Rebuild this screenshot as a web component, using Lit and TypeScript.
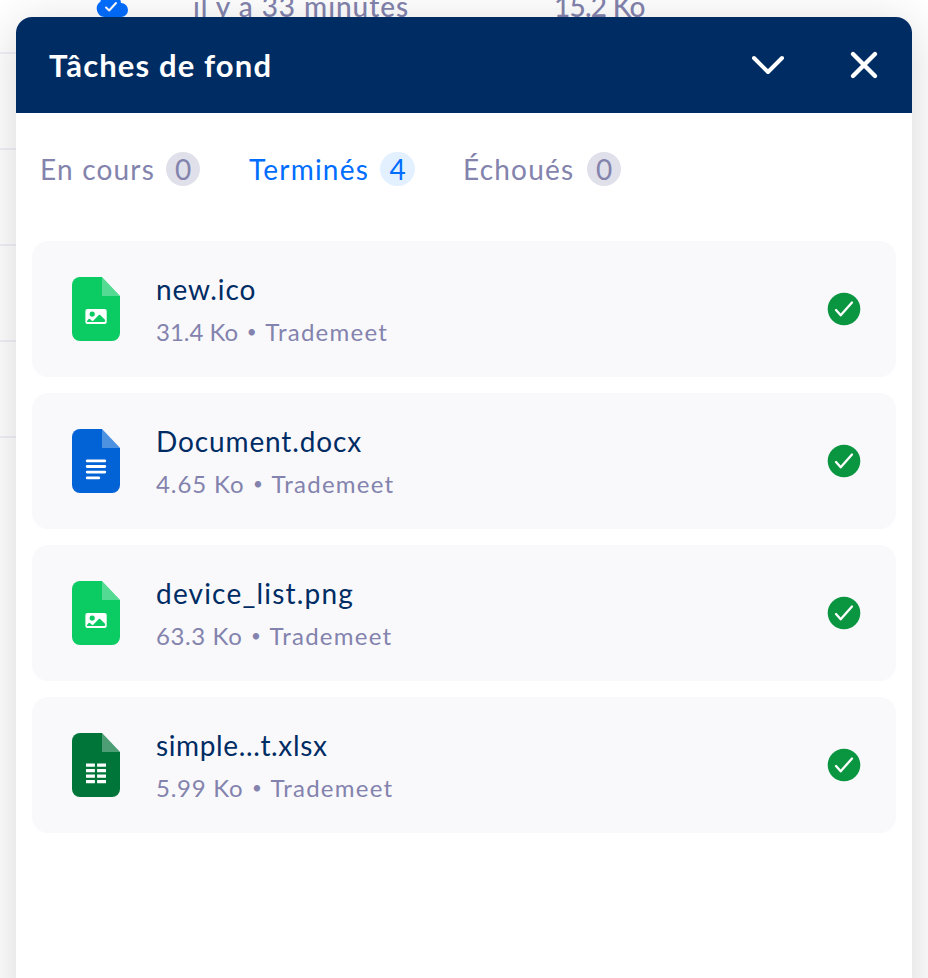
import { LitElement, html, css, svg } from "lit";
import { customElement, property } from "lit/decorators.js";

type Kind = "image" | "text" | "sheet";

const glyphs = {
  image: svg`<rect x="13.4" y="32" width="21.3" height="15" rx="2" fill="#fff"/>
    <circle cx="20.200" cy="37.1" r="2.6" fill="#0bcb63"/>
    <path d="M15 45v-1l1.700-2q.6-.6 1.200 0l2 1.700q.7.500 1.300 0l5.600-5.700q.7-.7 1.400 0l5 5v1.200l-.8.8z" fill="#0bcb63"/>`,
  text: svg`<path d="M15.2 31.9h17.600M15.2 37.500h17.600M15.2 43.100h17.600M15.2 48.900h11.600" stroke="#fff" stroke-width="2.8" stroke-linecap="round"/>`,
  sheet: svg`<path d="M14 32.1h8.9M25.1 32.1h8.9M14 37.6h8.9M25.1 37.6h8.9M14 43.1h8.9M25.1 43.1h8.9M14 48.6h8.9M25.1 48.6h8.9" stroke="#fff" stroke-width="3.1"/>`,
};
const colors: Record<Kind, string> = { image: "#0bcb63", text: "#0163d5", sheet: "#007539" };

@customElement("file-icon")
class FileIcon extends LitElement {
  static styles = css`
    :host { display: block; width: 48px; height: 64px; }
    svg { display: block; }
  `;
  @property() kind: Kind = "text";
  render() {
    return html`<svg width="48" height="64" viewBox="0 0 48 64" fill="none">
      <path d="M8 0h22l18 19v37a8 8 0 0 1-8 8H8a8 8 0 0 1-8-8V8a8 8 0 0 1 8-8z" fill=${colors[this.kind]} />
      <path d="M30 0l18 19H30z" fill="#fff" fill-opacity=".3" />
      ${glyphs[this.kind]}
    </svg>`;
  }
}

const tabs = [
  { label: "En cours", count: 0, cls: "running" },
  { label: "Terminés", count: 4, cls: "done active" },
  { label: "Échoués", count: 0, cls: "failed" },
];
const files: { name: string; size: string; kind: Kind; cls: string }[] = [
  { name: "new.ico", size: "31.4 Ko", kind: "image", cls: "f1" },
  { name: "Document.docx", size: "4.65 Ko", kind: "text", cls: "f2" },
  { name: "device_list.png", size: "63.3 Ko", kind: "image", cls: "f3" },
  { name: "simple...t.xlsx", size: "5.99 Ko", kind: "sheet", cls: "f4" },
];

@customElement("app-root")
class AppRoot extends LitElement {
  static styles = css`
    * { box-sizing: border-box; }
    :host {
      display: grid; width: 928px; height: 978px; overflow: hidden; background: #fff;
      font-family: "Lato", "Open Sans", sans-serif; color: #8383ad;
    }
    .list, .panel { grid-area: 1 / 1; }
    .list { margin: -42px 32px 0 0; }
    .line {
      height: 96px; border-bottom: 2px solid #f0f0f7; display: grid;
      grid-template-columns: 96px 97px 361px 1fr; align-items: center;
      font-size: 28px; font-weight: 500; white-space: nowrap; line-height: 36px;
    }
    .cloud { grid-column: 2; display: block; }
    .ago { letter-spacing: .97px; padding-top: 2px; }
    .size { letter-spacing: -.75px; padding-top: 2px; }
    .panel {
      margin: 17px 16px 0; height: 1000px; background: #fff; border-radius: 16px 16px 0 0;
      box-shadow: 0 8px 48px rgba(0, 0, 0, .16); overflow: hidden; position: relative;
    }
    header {
      height: 96px; background: #002c64; color: #fff; display: flex; align-items: center;
      padding: 0 32px 0 33px;
    }
    h1 { margin: 0; flex: 1; font-size: 31px; font-weight: 700; letter-spacing: 1.13px; line-height: 40px; padding-bottom: 1px; }
    header svg { display: block; }
    header svg + svg { margin-left: 64px; }
    .tabs { display: flex; height: 128px; padding: 39px 24px 0; gap: 48px; }
    .tab { display: flex; gap: 12px; height: 34px; font-size: 28px; line-height: 35px; white-space: nowrap; }
    .label { letter-spacing: 1.2px; }
    .running .label { width: 114px; }
    .done .label { width: 119px; }
    .failed .label { width: 112px; }
    .running { margin-right: 1px; }
    .active { color: #006dff; }
    .count { width: 34px; border-radius: 17px; background: #e0e0ea; text-align: center; }
    .active .count { width: 35px; background: #e3f0ff; }
    .cards { display: grid; gap: 16px; padding: 0 16px; }
    .card {
      height: 136px; border-radius: 16px; background: #f9f9fc; display: flex; align-items: center;
      padding: 0 34px 0 40px;
    }
    .info { flex: 1; margin-left: 36px; padding-top: 2px; white-space: nowrap; }
    .name { font-size: 28px; line-height: 44px; color: #002c64; letter-spacing: .88px; }
    .meta { font-size: 24px; line-height: 42px; display: flex; }
    .weight { letter-spacing: .9px; }
    .f1 .weight { letter-spacing: 0; }
    .f3 .weight { letter-spacing: .6px; }
    .f4 .weight { letter-spacing: .75px; }
    .f3 .name { letter-spacing: 1.2px; }
    .f4 .name { letter-spacing: .63px; }
    .dot { width: 27px; text-align: center; font-size: 17px; }
    .owner { letter-spacing: 1.25px; }
  `;

  render() {
    return html`
      <div class="list">
        <div class="line">
          <svg class="cloud" width="32" height="24" viewBox="0 0 32 24">
            <path d="M8.500 24A8.500 8.500 0 0 1 4.500 8.500 10 10 0 0 1 14.500 0Q24 .8 25 10a7 7 0 0 1 0 14z" fill="#006dff" />
            <path d="M10 14.500l3.200 3 6.800-7.500" fill="none" stroke="#fff" stroke-width="2" stroke-linecap="round" stroke-linejoin="round" />
          </svg>
          <span class="ago">il y a 33 minutes</span>
          <span class="size">15.2 Ko</span>
        </div>
        <div class="line"></div><div class="line"></div><div class="line"></div><div class="line"></div>
      </div>
      <section class="panel">
        <header>
          <h1>Tâches de fond</h1>
          <svg width="32" height="32" viewBox="0 0 32 32" fill="none" stroke="#fff" stroke-width="4" stroke-linecap="round" stroke-linejoin="round"><path d="M2 9l14 14L30 9" /></svg>
          <svg width="32" height="32" viewBox="0 0 32 32" fill="none" stroke="#fff" stroke-width="4.400" stroke-linecap="round"><path d="M5 5l22 22M27 5L5 27" /></svg>
        </header>
        <nav class="tabs">
          ${tabs.map((t) => html`<div class="tab ${t.cls}"><span class="label">${t.label}</span><span class="count">${t.count}</span></div>`)}
        </nav>
        <div class="cards">
          ${files.map((f) => html`<div class="card ${f.cls}">
            <file-icon .kind=${f.kind}></file-icon>
            <div class="info">
              <div class="name">${f.name}</div>
              <div class="meta"><span class="weight">${f.size}</span><span class="dot">•</span><span class="owner">Trademeet</span></div>
            </div>
            <svg width="36" height="36" viewBox="0 0 36 36" fill="none">
              <circle cx="18" cy="18" r="16.300" fill="#0a9540" />
              <path d="M10 19l4.700 5.300L26 11.500" stroke="#fff" stroke-width="2.300" stroke-linecap="round" stroke-linejoin="round" />
            </svg>
          </div>`)}
        </div>
      </section>
    `;
  }
}
